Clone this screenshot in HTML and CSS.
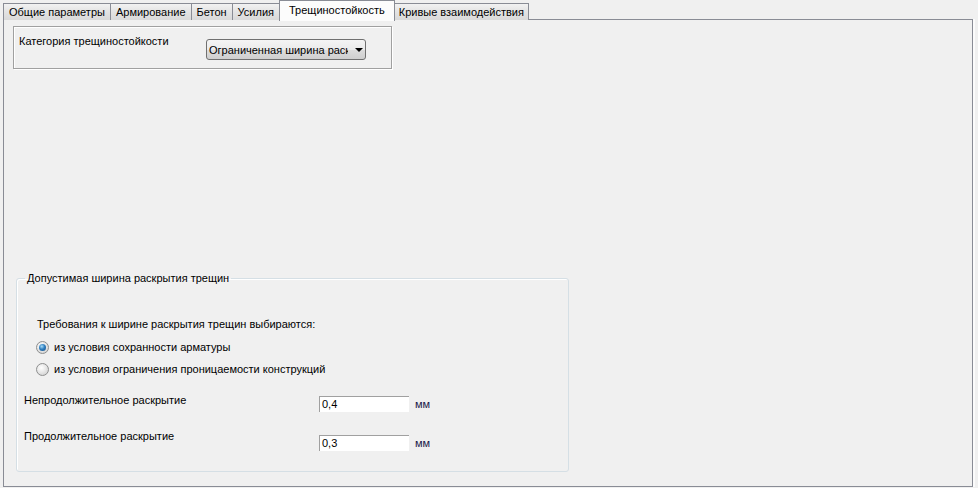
FILE: index.html
```html
<!DOCTYPE html>
<html lang="ru">
<head>
<meta charset="UTF-8">
<title>Трещиностойкость</title>
<link rel="stylesheet" href="styles.css">
</head>
<body>
    <div class="window">
        <div class="tabs">
            <div class="tab">Общие параметры</div>
            <div class="tab">Армирование</div>
            <div class="tab">Бетон</div>
            <div class="tab">Усилия</div>
            <div class="tab active">Трещиностойкость</div>
            <div class="tab last">Кривые взаимодействия</div>
        </div>
        <div class="page">
            <div class="category">
                <div class="category-label">Категория трещиностойкости</div>
                <div class="combo">
                    <span class="combo-text">Ограниченная ширина раскрытия</span>
                    <span class="combo-arrow"></span>
                </div>
            </div>

            <fieldset class="group">
                <legend>Допустимая ширина раскрытия трещин</legend>
                <div class="req-text">Требования к ширине раскрытия трещин выбираются:</div>
                <div class="radios">
                    <div class="radio-row"><span class="radio checked"></span>из условия сохранности арматуры</div>
                    <div class="radio-row"><span class="radio"></span>из условия ограничения проницаемости конструкций</div>
                </div>
                <div class="row short">
                    <div class="row-label">Непродолжительное раскрытие</div>
                    <div class="field"><span class="input">0,4</span><span class="unit">мм</span></div>
                </div>
                <div class="row long">
                    <div class="row-label">Продолжительное раскрытие</div>
                    <div class="field"><span class="input">0,3</span><span class="unit">мм</span></div>
                </div>
            </fieldset>
        </div>
    </div>
</body>
</html>
```

FILE: styles.css
```css
/* window */
body {
    margin: 0;
    background-color: #f0f0f0;
    font-family: "Liberation Sans", Arial, sans-serif;
    font-size: 11px;
    color: #000;
}

.window {
    height: 488px;
    display: flex;
    flex-direction: column;
    padding-left: 3px;
    box-sizing: border-box;
}

/* tabs */
.tabs {
    display: flex;
    align-items: flex-end;
    height: 20px;
    position: relative;
    z-index: 1;
}

.tab {
    height: 17px;
    line-height: 16px;
    padding: 0 5px;
    box-sizing: border-box;
    border: 1px solid #898c95;
    border-bottom: none;
    border-right: none;
    background: linear-gradient(#f2f2f2, #e3e3e3 50%, #d9d9d9);
    white-space: nowrap;
}

.tab.last {
    padding: 0 4px;
    border-right: 1px solid #898c95;
}

.tab.active {
    height: 21px;
    line-height: 18px;
    margin-bottom: -1px;
    padding: 0 9px;
    background: #fcfcfc;
    border-right: 1px solid #898c95;
}

.tab.active + .tab {
    border-left: none;
}

/* page body */
.page {
    width: 970px;
    flex: 1;
    margin-top: -1px;
    margin-bottom: 1px;
    border: 1px solid #898c95;
    box-shadow: 2px 0 0 #fbfbfb;
    box-sizing: border-box;
    background-color: #f0f0f0;
}

.category {
    width: 379px;
    height: 43px;
    margin: 6px 0 0 9px;
    padding: 7px 0 0 5px;
    box-sizing: border-box;
    border: 1px solid #a0a0a0;
    box-shadow: inset 1px 1px 0 #fff, 1px 1px 0 #fff;
    display: flex;
    align-items: flex-start;
}

.category-label {
    width: 187px;
    line-height: 14px;
}

.combo {
    width: 160px;
    height: 21px;
    margin-top: 5px;
    box-sizing: border-box;
    border: 1px solid #707070;
    border-radius: 3px;
    background: linear-gradient(#f4f4f4, #ebebeb 50%, #dddddd 51%, #cfcfcf);
    display: flex;
    align-items: center;
}

.combo-text {
    width: 139px;
    padding-left: 2px;
    overflow: hidden;
    white-space: nowrap;
}

.combo-arrow {
    margin-left: 7px;
    width: 0;
    height: 0;
    border-left: 4px solid transparent;
    border-right: 4px solid transparent;
    border-top: 4px solid #000;
}

/* crack width group */
.group {
    width: 553px;
    height: 201px;
    margin: 202px 0 0 12px;
    padding: 0;
    box-sizing: border-box;
    border: 1px solid #d5dfe5;
    border-radius: 3px;
    box-shadow: inset 1px 1px 0 #fff;
}

.group legend {
    margin-left: 8px;
    padding: 0 2px;
    line-height: 14px;
}

.req-text {
    margin: 32px 0 0 20px;
    line-height: 14px;
}

.radios {
    margin: 9px 0 0 19px;
    display: flex;
    flex-direction: column;
    gap: 8px;
}

.radio-row {
    display: flex;
    align-items: center;
    height: 14px;
}

.radio {
    width: 11px;
    height: 11px;
    margin-right: 5px;
    border: 1px solid #8e8f8f;
    border-radius: 50%;
    background: radial-gradient(circle at 40% 35%, #ffffff, #e8e8e8 45%, #c9c9c9);
    position: relative;
}

.radio.checked::after {
    content: "";
    position: absolute;
    left: 2px;
    top: 2px;
    width: 7px;
    height: 7px;
    border-radius: 50%;
    background: radial-gradient(circle at 40% 35%, #a9dcf6, #2f7fc0 45%, #154a80);
}

.row {
    display: flex;
    align-items: flex-start;
    margin: 17px 0 0 7px;
}

.row-label {
    width: 295px;
    line-height: 14px;
}

.field {
    display: flex;
    align-items: center;
    margin-top: 3px;
}

.row.long .field {
    margin-top: 6px;
}

.input {
    width: 90px;
    height: 16px;
    line-height: 15px;
    padding-left: 2px;
    box-sizing: border-box;
    background-color: #fff;
    border-top: 1px solid #a0a0a0;
    border-left: 1px solid #a0a0a0;
}

.unit {
    margin-left: 6px;
    color: #1a1a4a;
}
```
